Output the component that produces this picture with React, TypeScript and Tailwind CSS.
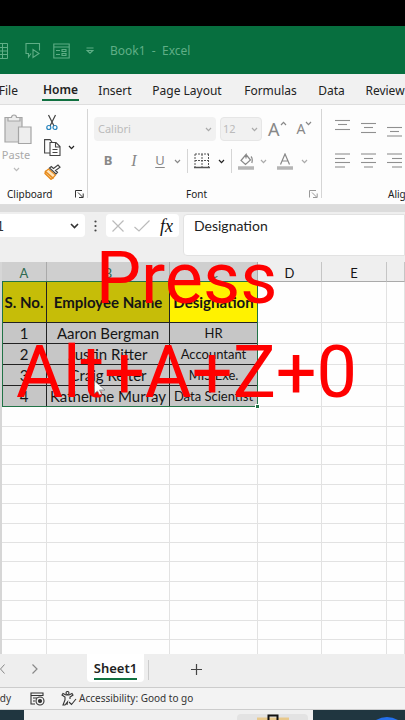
import React from "react";

const tabs: [string, string][] = [
  ["File", "w-[22px] pr-1"],
  ["Home", "w-[37px]"],
  ["Insert", "w-8"],
  ["Page Layout", "w-[72px]"],
  ["Formulas", "w-[55px]"],
  ["Data", "w-[27px]"],
  ["Review", "w-10"],
];

const people = [
  ["1", "Aaron Bergman", "HR"],
  ["2", "Justin Ritter", "Accountant"],
  ["3", "Craig Reiter", "MIS Exe."],
  ["4", "Katherine Murray", "Data Scientist"],
];

function Chevron({ className = "text-[#aaa]" }: { className?: string }) {
  return (
    <svg className={`h-[5px] w-[7px] shrink-0 ${className}`} viewBox="0 0 7 5" fill="none" stroke="currentColor" strokeWidth="1.2">
      <path d="M1 1l2.5 2.7L6 1" />
    </svg>
  );
}

function Lines({ rows }: { rows: [number, number, number][] }) {
  return (
    <svg className="h-[18px] w-[15px]" viewBox="0 0 15 18" stroke="#909090" strokeWidth="1.1">
      {rows.map(([x1, x2, y]) => (
        <path key={y} d={`M${x1} ${y}H${x2}`} />
      ))}
    </svg>
  );
}

function Launcher({ color }: { color: string }) {
  return (
    <svg className="h-2 w-[9px]" viewBox="0 0 9 8" fill="none" stroke={color} strokeWidth="1">
      <path d="M.5 7.5V.5H7M3 2.5l4.5 4.5M8.2 3.5v4H4" />
    </svg>
  );
}

function TitleBar() {
  return (
    <header className="flex h-12 items-center bg-[#076f3f] pt-0.5 text-[#5fae86]">
      <button aria-label="Table" className="w-2">
        <svg className="h-4 w-2" viewBox="0 0 8 16" fill="none" stroke="currentColor">
          <path d="M0 .5h7.5v15H0M0 4.5h7.5M0 8h7.5M0 11.5h7.5M2.5 .5v15" />
        </svg>
      </button>
      <button aria-label="Speak cells" className="ml-[17px]">
        <svg className="h-4 w-4" viewBox="0 0 16 16" fill="none" stroke="currentColor" strokeWidth="1.1">
          <path d="M6 10.5L3.5 14v-3.500H1v-10h13.500v7M8 6.500v8l6-4z" />
        </svg>
      </button>
      <button aria-label="Form" className="ml-3">
        <svg className="h-4 w-[17px]" viewBox="0 0 17 16" fill="none" stroke="currentColor" strokeWidth="1.1">
          <path d="M.8 1h15.400v14H.8zM.8 4h15.400M3 7.500h4M3 11.500h4M9 6.500h4v2H9zM9 10.500h4v2H9z" />
        </svg>
      </button>
      <button aria-label="Customize toolbar" className="ml-4">
        <svg className="h-2 w-2" viewBox="0 0 8 8" fill="none" stroke="currentColor" strokeWidth="1.2">
          <path d="M.5 1h7M1.200 3.500h5.600L4 6.200z" />
        </svg>
      </button>
      <h1 className="ml-4 whitespace-pre text-xs">Book1{"  "}-{"  "}Excel</h1>
    </header>
  );
}

function Ribbon() {
  return (
    <section className="flex h-[101px] overflow-hidden border-y border-[#dedede] bg-[#fdfdfd] text-[10px] text-[#222]">
      <div className="flex w-[87px] shrink-0 flex-col">
        <div className="flex h-[81px] pt-2">
          <button className="flex w-8 flex-col items-center text-[11px] leading-4 text-[#aaa]">
            <svg className="ml-1 h-8 w-7" viewBox="0 0 28 32" fill="#eee" stroke="#a5a5a5" strokeWidth="1.200">
              <path d="M1 4.500h17V29H1z" fill="#dcdcdc" />
              <path d="M4 8V4.500h3.500a2.500 2.500 0 0 1 5 0H16V8z" />
              <path d="M14.500 14h12.500v16.500H14.500z" />
            </svg>
            <span className="mt-0.5">Paste</span>
            <Chevron className="mt-1 text-[#bbb]" />
          </button>
          <div className="ml-3 flex flex-col gap-2">
            <button aria-label="Cut" className="h-[18px]">
              <svg className="ml-0.5 h-[17px] w-3" viewBox="0 0 12 17" fill="none">
                <path d="M2.500 1l5.500 11M9.500 1L4 12" stroke="#444" strokeWidth="1.200" />
                <g stroke="#2583bd" strokeWidth="1.200"><circle cx="2.800" cy="13.500" r="2" /><circle cx="9" cy="13.500" r="2" /></g>
              </svg>
            </button>
            <button aria-label="Copy" className="flex h-[17px] items-center gap-[7px]">
              <svg className="h-[17px] w-[17px]" viewBox="0 0 17 17" fill="#fdfdfd" stroke="#444" strokeWidth="1.100">
                <path d="M6 14H.6V.6h5.500L8 3" />
                <path d="M6 3.500h6l4 4v9H6zM11.500 3.500v4.500H16M8.500 10.500h5M8.500 13.500h5" />
              </svg>
              <Chevron className="text-[#222]" />
            </button>
            <button aria-label="Format painter" className="h-4">
              <svg className="h-4 w-[17px]" viewBox="0 0 17 16" fill="none">
                <path d="M1.500 7.500l7.500 6.500-2 1.300L1 9.500z" fill="#ffd08a" stroke="#e68a1d" strokeWidth="1.400" />
                <path d="M1.500 7.500L4.500 5l7 6-2.500 3z" fill="#ffe3b8" stroke="#e68a1d" strokeWidth="1.200" />
                <path d="M5.500 4l6.500 6 1.500-1.800-2-1.700L16 3.200 14 1l-4.500 3.500L7.300 2.500z" fill="#fff" stroke="#444" strokeWidth="1.200" />
              </svg>
            </button>
          </div>
        </div>
        <div className="flex items-center justify-between pl-[7px] pr-[3px] leading-4">
          <span>Clipboard</span>
          <button aria-label="Clipboard settings"><Launcher color="#333" /></button>
        </div>
      </div>
      <div className="mb-1.5 mt-1 flex w-[235px] shrink-0 flex-col border-x border-[#d5d5d5] pl-1.5">
        <div className="mt-2 flex h-6 items-center">
          <button aria-label="Font name" className="flex h-6 w-[122px] items-center justify-between rounded bg-[#f1f1f1] px-1 text-[11px] text-[#bbb]">Calibri<Chevron /></button>
          <button aria-label="Font size" className="ml-1 flex h-6 w-[42px] items-center justify-between rounded border border-[#e6e6e6] bg-[#f1f1f1] pl-0.5 pr-[3px] text-[11px] text-[#bbb]">12<Chevron /></button>
          <button aria-label="Increase font size" className="ml-1.5 flex text-lg leading-6 text-[#888]">A<Chevron className="mt-1 rotate-180 text-[#888]" /></button>
          <button aria-label="Decrease font size" className="ml-2.5 flex text-sm leading-6 text-[#888]">A<Chevron className="mt-1 text-[#888]" /></button>
        </div>
        <div className="mt-2 flex h-6 items-center text-[13px] text-[#888]">
          <button className="ml-1.5 w-4 font-bold">B</button>
          <button className="ml-2.5 w-4 font-['Liberation_Serif',serif] text-base italic">I</button>
          <button className="ml-2.5 w-4 underline underline-offset-2">U</button>
          <Chevron className="ml-1.5" />
          <span className="ml-1.5 h-6 border-l border-[#d5d5d5]" />
          <button aria-label="Borders" className="ml-1.5 flex items-center gap-2">
            <svg className="h-4 w-4" viewBox="0 0 16 16" fill="none" stroke="#555"><path d="M1 1v13M14.500 1v13M8 1v13M1 7.500h14M1 1h14" strokeDasharray="2 1" /><path d="M0 14.500h16" strokeWidth="1.500" /></svg>
            <Chevron className="text-[#222]" />
          </button>
          <span className="ml-1.5 h-6 border-l border-[#d5d5d5]" />
          <button aria-label="Fill color" className="ml-1.5 flex items-center gap-1.5">
            <svg className="h-[17px] w-4" viewBox="0 0 16 17" fill="none" stroke="#888" strokeWidth="1.200"><path d="M8 1.500l4.500 5.500-5 4.500L3 7.500 8 1.500v4M13 3.500c1.500 1.500 1.500 4 .8 6.500" /><path d="M0 15h16" stroke="#b5b5b5" strokeWidth="3.500" /></svg>
            <Chevron />
          </button>
          <button aria-label="Font color" className="ml-2.5 flex items-center gap-2">
            <svg className="h-[17px] w-4" viewBox="0 0 16 17" fill="none" stroke="#888" strokeWidth="1.200"><path d="M3.500 11.500L8 1l4.500 10.500M5 8h6" /><path d="M0 15h16" stroke="#b5b5b5" strokeWidth="3.500" /></svg>
            <Chevron />
          </button>
        </div>
        <div className="mt-[13px] flex items-center leading-4">
          <span className="ml-[92px]">Font</span>
          <button aria-label="Font settings" className="ml-auto mr-[3px]"><Launcher color="#999" /></button>
        </div>
      </div>
      <div className="flex min-w-0 flex-1 flex-col pl-[13px]">
        <div className="mt-3.5 flex gap-[11px]">
          <button aria-label="Top align"><Lines rows={[[0, 15, 1.5], [3, 12, 5.5], [0, 15, 10.5]]} /></button>
          <button aria-label="Middle align"><Lines rows={[[0, 15, 4.5], [3, 12, 8.5], [0, 15, 13.5]]} /></button>
          <button aria-label="Bottom align"><Lines rows={[[0, 15, 8.5], [3, 12, 12.5], [0, 15, 17]]} /></button>
        </div>
        <div className="mt-[15px] flex gap-[11px]">
          <button aria-label="Align left"><Lines rows={[[0, 15, 2], [0, 10, 6.5], [0, 15, 10.5], [0, 10, 15]]} /></button>
          <button aria-label="Center"><Lines rows={[[0, 15, 2], [3, 12, 6.5], [0, 15, 10.5], [3, 12, 15]]} /></button>
          <button aria-label="Align right"><Lines rows={[[0, 15, 2], [5, 15, 6.5], [0, 15, 10.5], [5, 15, 15]]} /></button>
        </div>
        <span className="ml-[53px] mt-4 whitespace-nowrap leading-4">Alignment</span>
      </div>
    </section>
  );
}

function FormulaBar() {
  return (
    <section className="flex h-[57px] items-start border-t-[7px] border-[#dcdcdc] bg-[#efefef] font-['Lato',sans-serif] text-sm">
      <button aria-label="Name box" className="mt-0.5 flex h-[23px] w-[85px] items-center justify-between rounded-r bg-white pr-1.5 text-[#333]">
        <span className="-ml-1">1</span>
        <svg className="h-[6px] w-[9px]" viewBox="0 0 9 6" fill="none" stroke="#333" strokeWidth="1.600"><path d="M1 1l3.500 3.500L8 1" /></svg>
      </button>
      <svg className="ml-[9px] mt-2 h-3 w-[3px]" viewBox="0 0 3 12" fill="#444"><circle cx="1.500" cy="1.500" r="1.100" /><circle cx="1.500" cy="6" r="1.100" /><circle cx="1.500" cy="10.500" r="1.100" /></svg>
      <div className="ml-[9px] mt-0.5 flex h-[23px] w-[73px] items-center justify-between rounded bg-white px-1.5">
        <button aria-label="Cancel"><svg className="h-3 w-3" viewBox="0 0 12 12" stroke="#bbb" strokeWidth="1.200"><path d="M.5.5l11 11M11.500.5l-11 11" /></svg></button>
        <button aria-label="Enter"><svg className="h-3 w-4" viewBox="0 0 16 12" fill="none" stroke="#bbb" strokeWidth="1.200"><path d="M.5 7l4.500 4L15.500.5" /></svg></button>
        <button aria-label="Insert function" className="font-['Liberation_Serif',serif] text-lg italic leading-5 text-[#111]">fx</button>
      </div>
      <input aria-label="Formula" defaultValue="Designation" className="ml-1 mt-0.5 h-[42px] min-w-0 flex-1 rounded-l border border-[#e2e2e2] bg-white pb-5 pl-2.5 text-[#222] outline-none" />
    </section>
  );
}

const grid = "border-b border-r border-[#e2e2e2]";
const cell = "whitespace-nowrap border-b border-r border-[#222] p-0 text-center";

function Sheet() {
  return (
    <main className="relative overflow-hidden border-l-2 border-[#d6d6d6] bg-[#fefefe] font-['Lato',sans-serif] text-[#151515]">
      <table className="w-full table-fixed border-separate border-spacing-0">
        <colgroup>
          <col className="w-[45px]" /><col className="w-[123px]" /><col className="w-[88px]" /><col className="w-16" /><col className="w-[65px]" /><col />
        </colgroup>
        <thead>
          <tr className="h-5 text-[13px] leading-4">
            {["A", "B", "C"].map((c) => (
              <th key={c} scope="col" className="border-b border-r border-b-[#217346] border-r-[#aaa] bg-[#cfcfcf] p-0 pt-0.5 font-normal text-[#2f6b50]">{c}</th>
            ))}
            {["D", "E", ""].map((c) => (
              <td key={c} className="border-b border-r border-b-[#aaa] border-r-[#c5c5c5] bg-[#efefef] p-0 pt-0.5 text-center">{c}</td>
            ))}
          </tr>
        </thead>
        <tbody>
          <tr className="h-[41px] text-[15px] font-bold">
            <td className={`${cell} bg-[#c6bd08]`}>S. No.</td>
            <td className={`${cell} bg-[#c6bd08]`}>Employee Name</td>
            <td className={`${cell} bg-[#fff200]`}>Designation</td>
            <td className={grid} /><td className={grid} /><td className={grid} />
          </tr>
          {people.map(([no, name, role]) => (
            <tr key={no} className="h-[21px] text-[15px] leading-4">
              <td className={`${cell} bg-[#c6c6c6]`}>{no}</td>
              <td className={`${cell} bg-[#c6c6c6]`}>{name}</td>
              <td className={`${cell} bg-[#c6c6c6] text-[13px] leading-4`}>{role}</td>
              <td className={grid} /><td className={grid} /><td className={grid} />
            </tr>
          ))}
          {Array.from({ length: 13 }, (_, i) => (
            <tr key={i} className={i === 12 ? "h-3.5" : i % 5 === 0 || i % 5 === 3 ? "h-5" : "h-[19px]"}>
              {[0, 1, 2, 3, 4, 5].map((c) => <td key={c} className={i === 12 ? "border-r border-[#e2e2e2]" : grid} />)}
            </tr>
          ))}
        </tbody>
      </table>
      <span className="absolute left-0 top-[19px] h-[126px] w-64 border border-[#217346]" />
      <span className="absolute left-[253px] top-[142px] size-[5px] border border-white bg-[#217346]" />
      <svg className="absolute left-[92px] top-[118px] z-10 h-4 w-3" viewBox="0 0 12 16" fill="#fff" stroke="#777" strokeWidth=".7"><path d="M.5 1v12.500l3-2.500 2 4 2-1-2-4h5.500z" /></svg>
    </main>
  );
}

export default function App() {
  return (
    <div className="relative overflow-hidden bg-[#efefef] font-['Noto_Sans',sans-serif]">
      <div className="h-[26px] bg-black" />
      <TitleBar />
      <nav className="flex h-[30px] gap-5 overflow-hidden bg-[#f1f1f1] text-xs text-[#222]">
        {tabs.map(([name, width]) => (
          <button key={name} className={`flex h-[27px] shrink-0 items-center whitespace-nowrap pt-1.5 ${width} ${name === "Home" ? "border-b-2 border-[#107040] font-semibold" : ""} ${name === "File" ? "justify-end" : "justify-center"}`}>{name}</button>
        ))}
      </nav>
      <Ribbon />
      <FormulaBar />
      <Sheet />
      <nav className="flex h-[33px] items-start bg-[#eeeeee] text-[#888]">
        <button aria-label="Previous sheet" className="mt-2.5"><svg className="h-2.5 w-[5px]" viewBox="0 0 5 10" fill="none" stroke="currentColor"><path d="M4.500.5L.5 5l4 4.500" /></svg></button>
        <button aria-label="Next sheet" className="ml-[27px] mt-2.5"><svg className="h-2.5 w-1.5" viewBox="0 0 6 10" fill="none" stroke="currentColor" strokeWidth="1.200"><path d="M.5.5L5 5 .5 9.500" /></svg></button>
        <button className="ml-[49px] flex h-7 w-[57px] justify-center rounded-b bg-white text-[13px] font-semibold leading-7 text-[#222]"><span className="h-[26px] border-b-2 border-[#107040]">Sheet1</span></button>
        <span className="ml-1 mt-1.5 h-5 border-l border-[#ccc]" />
        <button aria-label="New sheet" className="ml-[42px] mt-2.5"><svg className="h-[11px] w-[11px]" viewBox="0 0 11 11" stroke="#444" strokeWidth="1.200"><path d="M5.500 0v11M0 5.500h11" /></svg></button>
      </nav>
      <footer className="flex h-[23px] items-center overflow-hidden border-y border-[#ccc] bg-[#f3f3f3] text-[10px] text-[#333]">
        <span className="flex w-[11px] justify-end">Ready</span>
        <svg className="ml-[19px] h-3.5 w-[15px]" viewBox="0 0 15 14" fill="none" stroke="#333" strokeWidth="1.100"><path d="M5 12H1V1h12v3M1 3.500h12M3 6h4M3 9h2" /><circle cx="10" cy="9" r="4" /><circle cx="10" cy="9" r="1.500" fill="#333" /></svg>
        <svg className="ml-4 h-[15px] w-4" viewBox="0 0 16 15" fill="none" stroke="#333" strokeWidth="1.100"><circle cx="6.500" cy="2" r="1.500" /><path d="M6 14l.5-3L4 14H2l2-5V6L1 4l1-1.500 3 1.500h3l3-1.500 1 1.500-3 2v2M8 11l2.500 2.500L15 8" /></svg>
        <span className="ml-0.5 whitespace-nowrap">Accessibility: Good to go</span>
      </footer>
      <div className="flex h-2.5 overflow-hidden bg-[#f0f0f0]">
        <span className="w-6 bg-[#203640]" />
        <span className="ml-auto mr-[5px] mt-1 flex w-[71px] justify-center rounded-t bg-[#e3e3e3]">
          <svg className="h-1.5 w-8" viewBox="0 0 32 6" fill="none"><path d="M0 3.500h32V6H0z" fill="#e8c98c" /><path d="M11.500 6V1.500h9V6" stroke="#111" strokeWidth="2" /></svg>
        </span>
        <span className="flex w-[92px] justify-center bg-[#203640]">
          <svg className="ml-14 mt-[7px] h-[3px] w-6" viewBox="0 0 24 3" fill="#2470ee"><path d="M1 3Q12-3 23 3z" /></svg>
        </span>
      </div>
      <div className="absolute inset-x-0 top-[232px] pr-8 text-center font-['Roboto',sans-serif] text-[72px] leading-[94px] text-[#ff0000]">
        <p>Press</p>
        <p className="whitespace-nowrap">Alt+A+Z+0</p>
      </div>
    </div>
  );
}
